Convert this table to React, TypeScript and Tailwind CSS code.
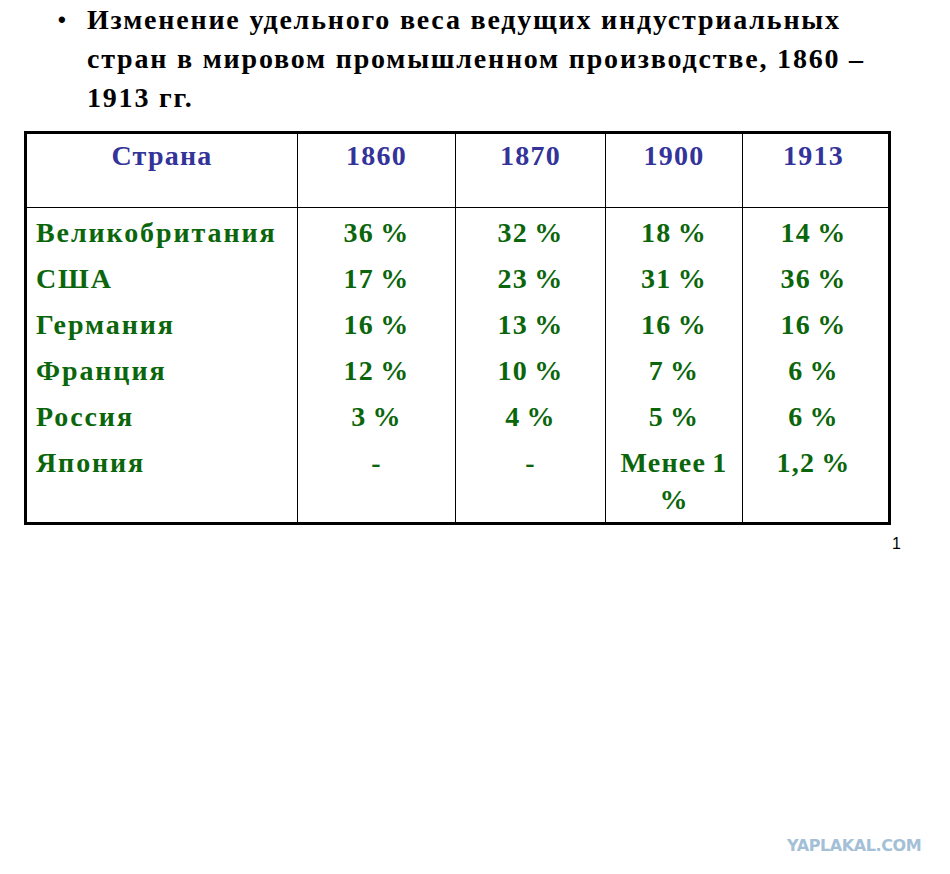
const serif = { fontFamily: '"Liberation Serif", "Times New Roman", serif' };
const sans = { fontFamily: '"Liberation Sans", Arial, sans-serif' };

const COLS = [
  { w: "w-[270px]", head: "text-center", body: "text-left pl-[9px] tracking-[1.9px]" },
  { w: "w-[158px]", head: "text-center", body: "text-center" },
  { w: "w-[150px]", head: "text-center", body: "text-center" },
  { w: "w-[137px]", head: "text-center", body: "text-center" },
  { w: "w-[142px]", head: "text-center", body: "text-center" },
];

const HEAD = ["Страна", "1860", "1870", "1900", "1913"];

// each column of the body is one cell with a line per country
const BODY: string[][] = [
  ["Великобритания", "США", "Германия", "Франция", "Россия", "Япония"],
  ["36 %", "17 %", "16 %", "12 %", "3 %", "-"],
  ["32 %", "23 %", "13 %", "10 %", "4 %", "-"],
  ["18 %", "31 %", "16 %", "7 %", "5 %", "Менее 1\n%"],
  ["14 %", "36 %", "16 %", "6 %", "6 %", "1,2 %"],
];

export default function App() {
  return (
    <div className="relative w-[950px] h-[874px] bg-white overflow-hidden" style={serif}>
      {/* title */}
      <div className="flex pl-[58px] text-[28px] leading-[39px] font-bold text-black">
        <span className="w-[29px] shrink-0 text-[22px]" style={sans}>•</span>
        <p className="tracking-[1.8px] whitespace-nowrap">
          Изменение удельного веса ведущих индустриальных
          <br />
          стран в мировом промышленном производстве, 1860 –
          <br />
          1913 гг.
        </p>
      </div>

      {/* table */}
      <div className="ml-[24px] mt-[14px] w-[867px] border-[3px] border-black text-[28px] leading-[37px] font-bold tracking-[1.2px] [word-spacing:-2px]">
        <div className="flex h-[74px] border-b border-black text-[#333399]">
          {HEAD.map((h, i) => (
            <div key={h} className={`${COLS[i].w} ${COLS[i].head} ${i > 0 ? "border-l border-black" : ""} pt-[3px]`}>
              {h}
            </div>
          ))}
        </div>
        <div className="flex h-[314px] text-[#0b660b]">
          {BODY.map((col, i) => (
            <div key={i} className={`${COLS[i].w} ${COLS[i].body} ${i > 0 ? "border-l border-black" : ""} pt-[6px] flex flex-col gap-[9px]`}>
              {col.map((v, j) => (
                <div key={j} className="whitespace-pre-line">{v}</div>
              ))}
            </div>
          ))}
        </div>
      </div>

      {/* page number */}
      <div className="absolute left-[892px] top-[532px] text-[16px] text-black" style={sans}>
        1
      </div>

      {/* watermark */}
      <div className="absolute left-[787px] top-[834px] text-[16px] font-black tracking-[-0.4px] text-[#a3c0d7]" style={{ fontFamily: '"DejaVu Sans", sans-serif' }}>
        YAPLAKAL.COM
      </div>
    </div>
  );
}
